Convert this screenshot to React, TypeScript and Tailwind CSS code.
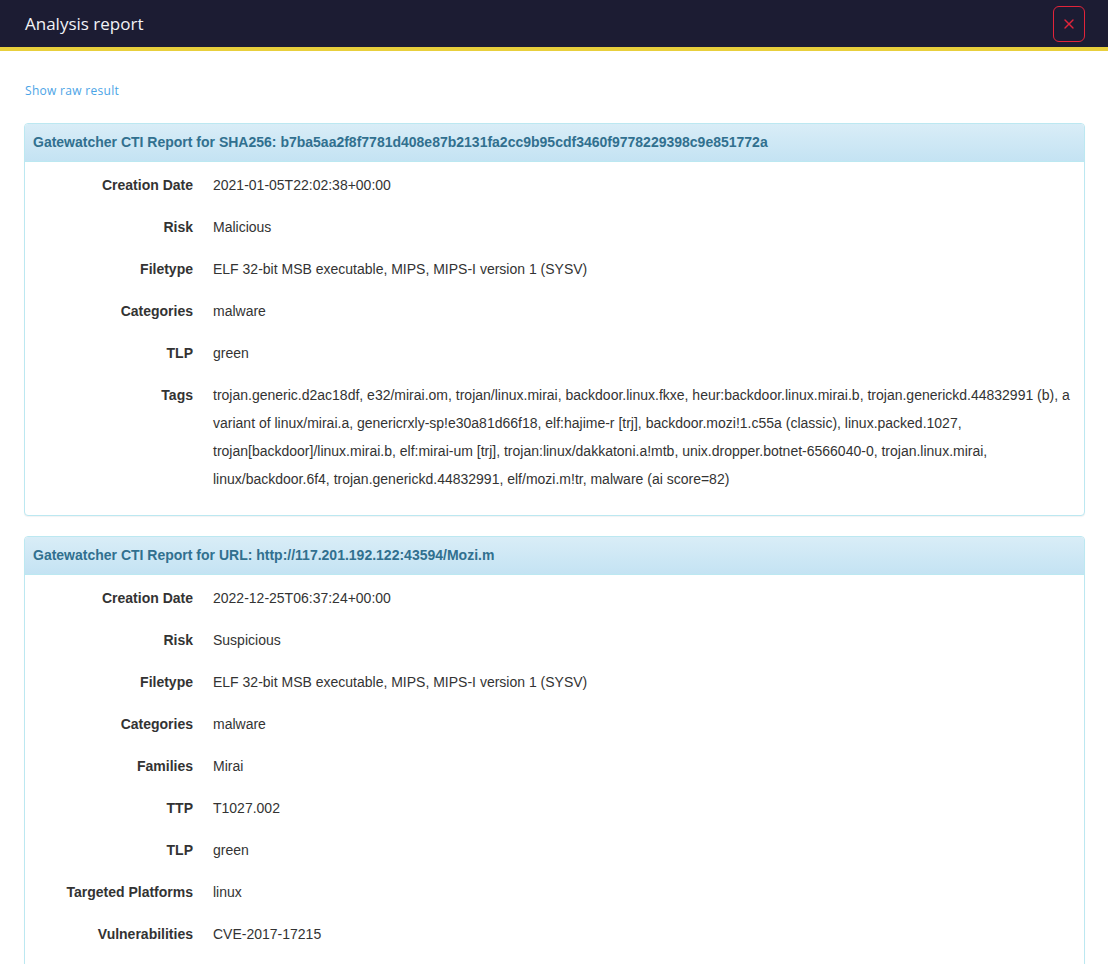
import { X } from "lucide-react";

type Row = { label: string; value: string };

type Report = { title: string; rows: Row[] };

const REPORTS: Report[] = [
  {
    title:
      "Gatewatcher CTI Report for SHA256: b7ba5aa2f8f7781d408e87b2131fa2cc9b95cdf3460f9778229398c9e851772a",
    rows: [
      { label: "Creation Date", value: "2021-01-05T22:02:38+00:00" },
      { label: "Risk", value: "Malicious" },
      { label: "Filetype", value: "ELF 32-bit MSB executable, MIPS, MIPS-I version 1 (SYSV)" },
      { label: "Categories", value: "malware" },
      { label: "TLP", value: "green" },
      {
        label: "Tags",
        value:
          "trojan.generic.d2ac18df, e32/mirai.om, trojan/linux.mirai, backdoor.linux.fkxe, heur:backdoor.linux.mirai.b, trojan.generickd.44832991 (b), a variant of linux/mirai.a, genericrxly-sp!e30a81d66f18, elf:hajime-r [trj], backdoor.mozi!1.c55a (classic), linux.packed.1027, trojan[backdoor]/linux.mirai.b, elf:mirai-um [trj], trojan:linux/dakkatoni.a!mtb, unix.dropper.botnet-6566040-0, trojan.linux.mirai, linux/backdoor.6f4, trojan.generickd.44832991, elf/mozi.m!tr, malware (ai score=82)",
      },
    ],
  },
  {
    title: "Gatewatcher CTI Report for URL: http://117.201.192.122:43594/Mozi.m",
    rows: [
      { label: "Creation Date", value: "2022-12-25T06:37:24+00:00" },
      { label: "Risk", value: "Suspicious" },
      { label: "Filetype", value: "ELF 32-bit MSB executable, MIPS, MIPS-I version 1 (SYSV)" },
      { label: "Categories", value: "malware" },
      { label: "Families", value: "Mirai" },
      { label: "TTP", value: "T1027.002" },
      { label: "TLP", value: "green" },
      { label: "Targeted Platforms", value: "linux" },
      { label: "Vulnerabilities", value: "CVE-2017-17215" },
    ],
  },
];

function ReportPanel({ report }: { report: Report }) {
  return (
    <div className="rounded border border-[#bce8f1] bg-white shadow-[0_1px_1px_rgba(0,0,0,0.05)] mb-[20px]">
      <div className="h-[38px] flex items-center px-[8px] rounded-t-[3px] border-b border-[#bce8f1] bg-gradient-to-b from-[#d9edf7] to-[#c4e3f3]">
        <h3 className="text-[14px] font-bold text-[#31708f]">{report.title}</h3>
      </div>
      <div className="pt-[9px] pb-[8px] pr-[14px]">
        {report.rows.map((r) => (
          <div key={r.label} className="flex mb-[14px] leading-[28px] text-[14px] text-[#333]">
            <div className="w-[168px] shrink-0 text-right font-bold">{r.label}</div>
            <div className="ml-[20px]">{r.value}</div>
          </div>
        ))}
      </div>
    </div>
  );
}

export default function App() {
  return (
    <div className="min-h-[964px] bg-white font-['Liberation_Sans',Arial,sans-serif]">
      <header className="h-[51px] bg-[#1c1c33] border-b-4 border-[#e8cf3c] flex items-center justify-between pl-[25px] pr-[23px]">
        <h1 className="font-['Open_Sans',sans-serif] text-[17px] text-[#f2f2f7] font-normal">
          Analysis report
        </h1>
        <button className="w-[32px] h-[36px] rounded-[6px] border border-[#e2243a] flex items-center justify-center text-[#e2243a]">
          <X size={16} strokeWidth={2} />
        </button>
      </header>
      <main className="px-[24px] pr-[23px]">
        <div className="pt-[27px] pb-[21px] pl-[1px]">
          <a className="font-['Open_Sans',sans-serif] text-[12px] tracking-[0.3px] text-[#4ba4e6] cursor-pointer">
            Show raw result
          </a>
        </div>
        {REPORTS.map((r) => (
          <ReportPanel key={r.title} report={r} />
        ))}
      </main>
    </div>
  );
}
